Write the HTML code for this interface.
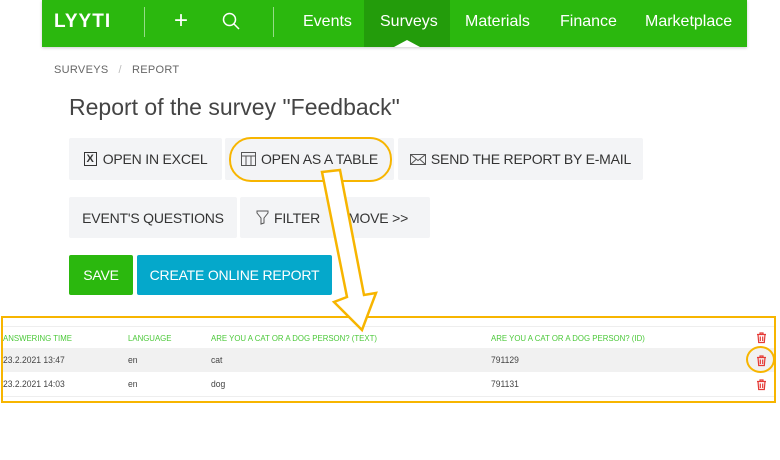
<!DOCTYPE html>
<html><head><style>
*{margin:0;padding:0;box-sizing:border-box}
body{width:780px;height:460px;background:#fff;font-family:"Liberation Sans",sans-serif;position:relative;overflow:hidden;color:#333}
.nav{position:absolute;left:42px;top:0;width:705px;height:47px;background:#2bb80e;box-shadow:0 1px 3px rgba(0,0,0,.2)}
.nav span{position:absolute;top:13px;color:#fff;font-size:16px}
.tab{position:absolute;left:322px;top:0;width:86px;height:47px;background:#239c0b}
.a{position:absolute}
.btn{position:absolute;background:#f3f4f6;border-radius:2px;font-size:14px;color:#333;display:flex;align-items:center;justify-content:center;letter-spacing:-.2px}
.th{position:absolute;font-size:8.5px;color:#4cc93a;top:333px;transform:scaleX(.92);transform-origin:left}
.td{position:absolute;font-size:9.5px;color:#444;transform:scaleX(.9);transform-origin:left}
</style></head><body>
<div class="nav">
 <span style="left:12px;font-weight:bold;font-size:19px;letter-spacing:1px;top:11px">LYYTI</span>
 <div class="a" style="left:102px;top:7px;width:1px;height:30px;background:rgba(255,255,255,.5)"></div>
 <span style="left:132px;top:7px;font-size:24px;font-weight:300">+</span>
 <svg class="a" style="left:180px;top:12px" width="18" height="18" fill="none" stroke="#fff" stroke-width="1.5"><circle cx="7.5" cy="7.5" r="6"/><path d="M12 12l5 5"/></svg>
 <div class="a" style="left:231px;top:7px;width:1px;height:30px;background:rgba(255,255,255,.5)"></div>
 <span style="left:261px">Events</span>
 <div class="tab"></div>
 <span style="left:338px">Surveys</span>
 <div class="a" style="left:352px;top:40px;width:0;height:0;border-left:13px solid transparent;border-right:13px solid transparent;border-bottom:7px solid #fff"></div>
 <span style="left:423px">Materials</span>
 <span style="left:518px">Finance</span>
 <span style="left:603px">Marketplace</span>
</div>
<div class="a" style="left:54px;top:64px;font-size:11px;color:#666;letter-spacing:.3px">SURVEYS &nbsp; <span style="color:#bbb">/</span> &nbsp; REPORT</div>
<div class="a" style="left:69px;top:94px;font-size:23px;color:#444">Report of the survey "Feedback"</div>

<div class="btn" style="left:69px;top:138px;width:153px;height:42px"><span style="border:1.5px solid #333;font-weight:bold;font-size:11px;padding:0 2px;margin-right:6px">X</span>OPEN IN EXCEL</div>
<div class="btn" style="left:225px;top:138px;width:169px;height:42px"><svg width="15" height="14" style="margin-right:5px" fill="none" stroke="#555"><rect x=".5" y=".5" width="14" height="13"/><path d="M.5 4h14M5 4v10M10 4v10"/></svg>OPEN AS A TABLE</div>
<div class="btn" style="left:398px;top:138px;width:245px;height:42px"><svg width="16" height="11" style="margin-right:5px" fill="none" stroke="#555"><rect x=".5" y=".5" width="15" height="10"/><path d="M.5 .5l7.5 6 7.5-6M.5 10.5l5.5-5M15.5 10.5l-5.5-5"/></svg>SEND THE REPORT BY E-MAIL</div>
<div class="btn" style="left:69px;top:197px;width:168px;height:41px">EVENT'S QUESTIONS</div>
<div class="btn" style="left:240px;top:197px;width:190px;height:41px;justify-content:flex-start;padding-left:16px"><svg width="13" height="15" style="margin-right:5px" fill="none" stroke="#555"><path d="M1 1h11v2l-4 5v5l-3 1V8L1 3z"/></svg>FILTER<span style="margin-left:28px">MOVE &gt;&gt;</span></div>
<div class="btn" style="left:69px;top:255px;width:64px;height:40px;background:#2bb80e;color:#fff">SAVE</div>
<div class="btn" style="left:137px;top:255px;width:195px;height:40px;background:#05a8cb;color:#fff">CREATE ONLINE REPORT</div>

<div class="a" style="left:1px;top:316px;width:775px;height:87px;border:2px solid #f7b500"></div>
<div class="a" style="left:3px;top:326px;width:771px;height:1px;background:#eee"></div>
<div class="a" style="left:3px;top:348px;width:771px;height:24px;background:#f1f1f1"></div>
<div class="a" style="left:3px;top:396px;width:771px;height:1px;background:#eee"></div>
<div class="th" style="left:3px">ANSWERING TIME</div>
<div class="th" style="left:128px">LANGUAGE</div>
<div class="th" style="left:211px">ARE YOU A CAT OR A DOG PERSON? (TEXT)</div>
<div class="th" style="left:491px">ARE YOU A CAT OR A DOG PERSON? (ID)</div>
<div class="td" style="left:3px;top:355px">23.2.2021 13:47</div><div class="td" style="left:128px;top:355px">en</div><div class="td" style="left:211px;top:355px">cat</div><div class="td" style="left:491px;top:355px">791129</div>
<div class="td" style="left:3px;top:379px">23.2.2021 14:03</div><div class="td" style="left:128px;top:379px">en</div><div class="td" style="left:211px;top:379px">dog</div><div class="td" style="left:491px;top:379px">791131</div>
<svg class="a" style="left:756px;top:332px" width="11" height="70" fill="none" stroke="#e53935" stroke-width="1.2">
 <g><path d="M1 2.5h9M4 2.5V1h3v1.5M2 2.5l.7 8h5.6l.7-8M4.3 4.5v4.5M6.7 4.5v4.5"/></g>
 <g transform="translate(0,23)"><path d="M1 2.5h9M4 2.5V1h3v1.5M2 2.5l.7 8h5.6l.7-8M4.3 4.5v4.5M6.7 4.5v4.5"/></g>
 <g transform="translate(0,47)"><path d="M1 2.5h9M4 2.5V1h3v1.5M2 2.5l.7 8h5.6l.7-8M4.3 4.5v4.5M6.7 4.5v4.5"/></g>
</svg>
<div class="a" style="left:746px;top:346px;width:29px;height:27px;border:2px solid #f7b500;border-radius:50%"></div>
<div class="a" style="left:229px;top:137px;width:163px;height:45px;border:2.5px solid #f7b500;border-radius:22px"></div>
<svg class="a" style="left:0;top:0" width="780" height="460"><polygon points="322,172 340,170 364,295 376,293 362,330 334,302 347,297" fill="#fff" stroke="#f7b500" stroke-width="2.5" stroke-linejoin="miter"/></svg>
</body></html>
